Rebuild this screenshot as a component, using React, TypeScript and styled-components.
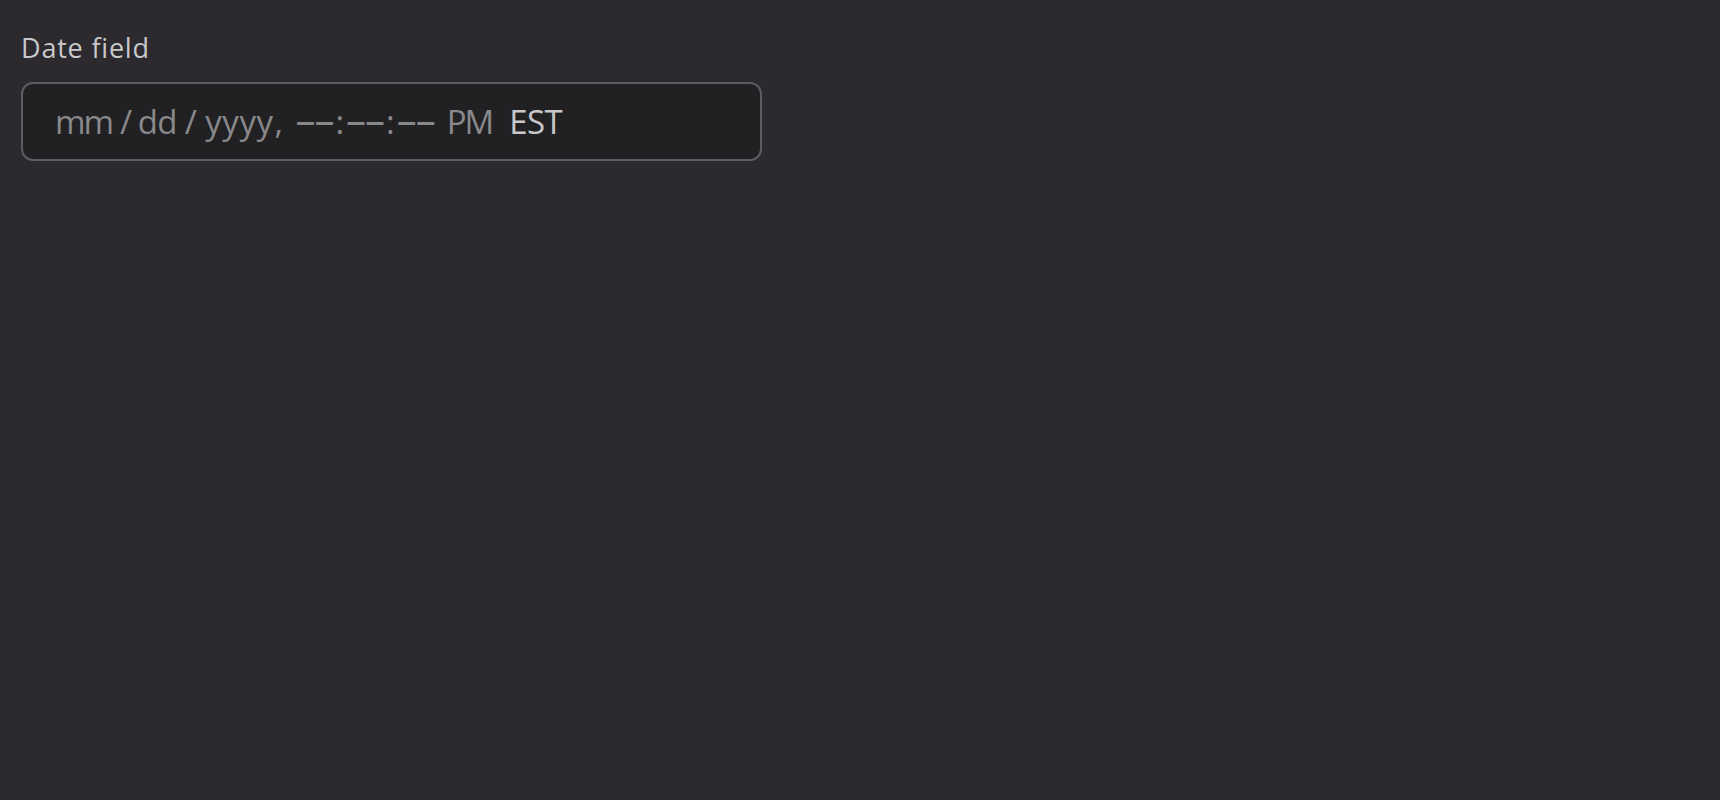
import React from 'react';
import styled, { createGlobalStyle } from 'styled-components';

const GlobalStyle = createGlobalStyle`
  html, body {
    margin: 0;
    padding: 0;
    background: #2c2a2e;
  }
  body {
    font-family: 'Open Sans', 'Noto Sans', sans-serif;
  }
`;

const Page = styled.div`
  min-height: 100vh;
  background: #2c2a2e;
  padding: 30px 21px;
  box-sizing: border-box;
`;

const Field = styled.div`
  display: flex;
  flex-direction: column;
  gap: 16px;
  width: 741px;
`;

const Label = styled.label`
  font-family: 'Open Sans', sans-serif;
  font-size: 27px;
  line-height: 36px;
  color: #c9c8cb;
  letter-spacing: 0.8px;
`;

const DateBox = styled.div`
  display: flex;
  align-items: center;
  height: 79px;
  box-sizing: border-box;
  padding: 0 32px;
  background: #212123;
  border: 2px solid #5d5c60;
  border-radius: 12px;
`;

const Value = styled.div`
  font-family: 'Open Sans', sans-serif;
  font-size: 33px;
  line-height: 40px;
  white-space: pre;
`;

const Segment = styled.span<{ $bright?: boolean; $gap?: number; $track?: number }>`
  color: ${(p) => (p.$bright ? '#c8c7ca' : '#89888b')};
  margin-left: ${(p) => p.$gap ?? 0}px;
  letter-spacing: ${(p) => p.$track ?? -0.6}px;
`;

const Colon = styled.span`
  margin: 0 2px;
  letter-spacing: 0;
`;

const Dashes = styled.span`
  font-size: 40px;
  line-height: 0;
  letter-spacing: -1px;
`;

export default function App() {
  return (
    <>
      <GlobalStyle />
      <Page>
        <Field>
          <Label>Date field</Label>
          <DateBox>
            <Value>
              <Segment $track={-2}>mm</Segment>
              <Segment $gap={8}>/</Segment>
              <Segment $gap={6}>dd</Segment>
              <Segment $gap={8}>/</Segment>
              <Segment $gap={9} $track={0.5}>
                yyyy
              </Segment>
              <Segment $gap={1}>,</Segment>
              <Segment $gap={13} $track={0}>
                <Dashes>––</Dashes>
                <Colon>:</Colon>
                <Dashes>––</Dashes>
                <Colon>:</Colon>
                <Dashes>––</Dashes>
              </Segment>
              <Segment $gap={12} $track={-2}>
                PM
              </Segment>
              <Segment $bright $gap={17}>
                EST
              </Segment>
            </Value>
          </DateBox>
        </Field>
      </Page>
    </>
  );
}
